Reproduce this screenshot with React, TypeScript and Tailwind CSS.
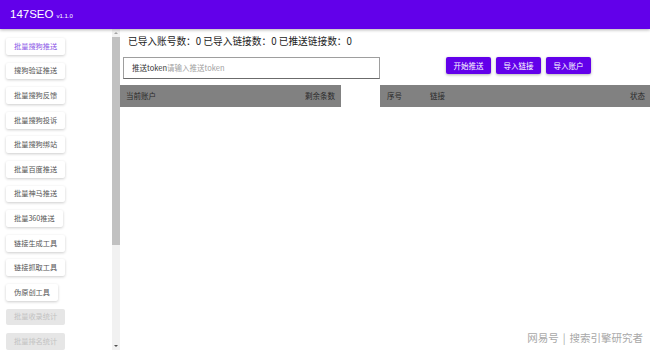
const menu = [
  { label: "批量搜狗推送", active: true },
  { label: "搜狗验证推送" },
  { label: "批量搜狗反馈" },
  { label: "批量搜狗投诉" },
  { label: "批量搜狗绑站" },
  { label: "批量百度推送" },
  { label: "批量神马推送" },
  { label: "批量360推送" },
  { label: "链接生成工具" },
  { label: "链接抓取工具" },
  { label: "伪原创工具" },
  { label: "批量收录统计", disabled: true },
  { label: "批量排名统计", disabled: true },
];

const cjk = { fontFamily: '"Noto Sans CJK SC", "Liberation Sans", sans-serif' };

function SideButton({ label, active, disabled }: { label: string; active?: boolean; disabled?: boolean }) {
  return (
    <button
      type="button"
      className={
        "h-[17px] px-2 self-start rounded-[2px] text-[7.2px] leading-none whitespace-nowrap " +
        (disabled
          ? "bg-[#e6e6e6] text-[#c2c2c2]"
          : "bg-white shadow-[0_1px_3px_rgba(0,0,0,0.2)] " + (active ? "text-[#8a55e6]" : "text-[#555]"))
      }
    >
      {label}
    </button>
  );
}

function PurpleButton({ children }: { children: React.ReactNode }) {
  return (
    <button
      type="button"
      className="h-[17px] w-[45px] rounded-[2px] bg-[#6200ea] text-white text-[7.5px] leading-none shadow-[0_1px_3px_rgba(0,0,0,0.3)]"
    >
      {children}
    </button>
  );
}

export default function App() {
  return (
    <div className="relative w-[650px] h-[350px] overflow-hidden bg-white flex flex-col" style={cjk}>
      {/* top bar */}
      <header className="h-[29px] shrink-0 bg-[#6200ea] flex items-center pl-[10px] shadow-[0_1px_3px_rgba(0,0,0,0.3)] z-10">
        <span className="text-white text-[11.5px] leading-none" style={{ fontFamily: '"Liberation Sans", sans-serif' }}>
          147SEO
        </span>
        <span className="text-white text-[6px] leading-none ml-[3px] mt-[2px]" style={{ fontFamily: '"Liberation Sans", sans-serif' }}>
          v1.1.0
        </span>
      </header>

      <div className="flex flex-1 min-h-0">
        {/* sidebar */}
        <aside className="w-[112px] shrink-0 overflow-hidden pl-[6px] pt-[9px] flex flex-col gap-[7.75px]">
          {menu.map((m) => (
            <SideButton key={m.label} {...m} />
          ))}
        </aside>

        {/* scrollbar */}
        <div className="w-[8px] shrink-0 bg-[#f1f1f1] flex flex-col items-center">
          <div className="h-[8px] w-full flex items-center justify-center">
            <div className="w-0 h-0 border-l-[2px] border-r-[2px] border-b-[2px] border-l-transparent border-r-transparent border-b-[#a3a3a3]" />
          </div>
          <div className="w-full h-[208px] bg-[#c1c1c1]" />
          <div className="flex-1" />
          <div className="h-[8px] w-full flex items-center justify-center">
            <div className="w-0 h-0 border-l-[2px] border-r-[2px] border-t-[2px] border-l-transparent border-r-transparent border-t-[#505050]" />
          </div>
        </div>

        {/* main */}
        <main className="flex-1 min-w-0 flex flex-col">
          <div className="pl-[8px] pt-[6px] h-[26px] text-[9.7px] text-[#222] leading-[12px] whitespace-nowrap">
            已导入账号数：0 已导入链接数：0 已推送链接数：0
          </div>

          <div className="flex items-start pl-[3px] mt-[2px]">
            <div className="w-[257px] h-[22px] border border-[#9e9e9e] border-b-[#6b6b6b] flex items-center pl-[8px] text-[7.5px]">
              <span className="text-[#333]">推送token</span>
              <span className="text-[#a0a0a0]">请输入推送token</span>
            </div>
            <div className="flex gap-[5px] ml-[66px]">
              <PurpleButton>开始推送</PurpleButton>
              <PurpleButton>导入链接</PurpleButton>
              <PurpleButton>导入账户</PurpleButton>
            </div>
          </div>

          <div className="flex mt-[6px]">
            <div className="w-[221px] h-[22px] bg-[#818181] flex items-center justify-between px-[6px] text-[7.5px] text-[#2a2a2a]">
              <span>当前账户</span>
              <span>剩余条数</span>
            </div>
            <div className="ml-[39px] flex-1 h-[22px] bg-[#818181] flex items-center pl-[7px] pr-[5px] text-[7.5px] text-[#2a2a2a]">
              <span className="w-[43px]">序号</span>
              <span className="flex-1">链接</span>
              <span>状态</span>
            </div>
          </div>
        </main>
      </div>

      {/* watermark */}
      <div className="absolute right-[7px] bottom-[7px] text-[10.5px] text-[#a8a8a8] leading-none whitespace-nowrap">
        <span>网易号</span>
        <span className="mx-[4px]">|</span>
        <span>搜索引擎研究者</span>
      </div>
    </div>
  );
}
